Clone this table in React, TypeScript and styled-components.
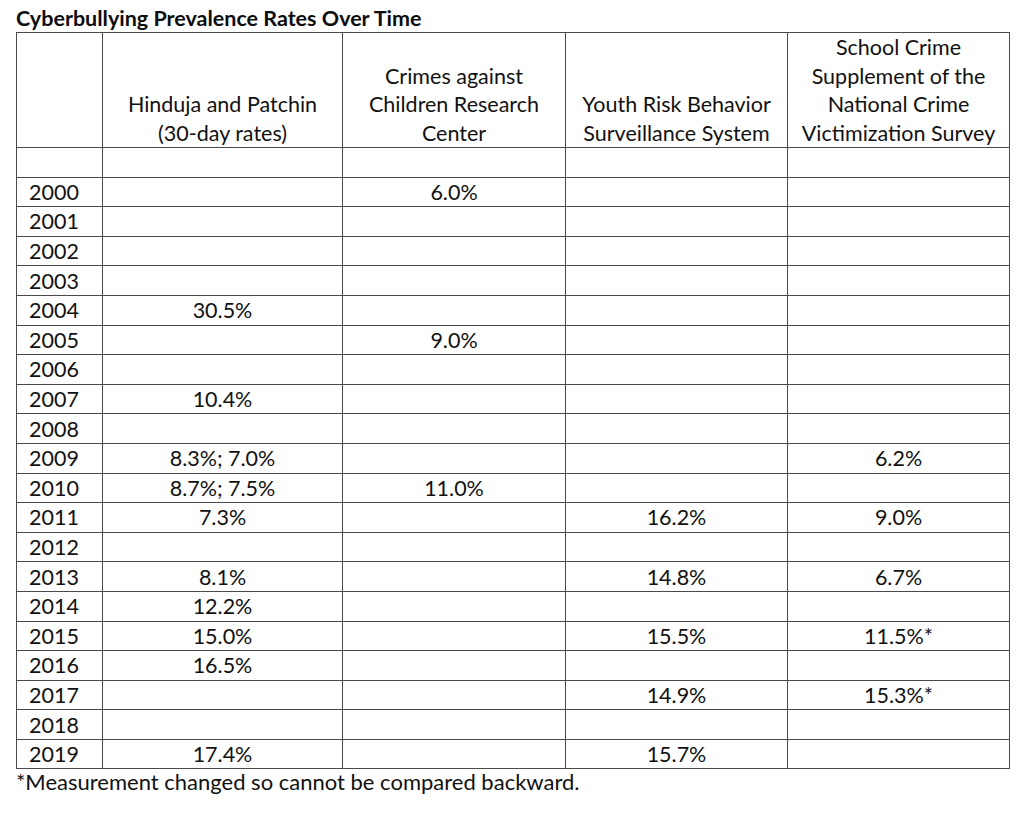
import React from "react";
import styled, { createGlobalStyle } from "styled-components";

const Global = createGlobalStyle`
  html, body { margin: 0; padding: 0; background: #ffffff; }
  body { font-family: Lato, "Open Sans", "Liberation Sans", sans-serif; color: #111111; }
`;

const Page = styled.div`
  width: 1024px;
  height: 822px;
  padding-left: 16px;
  box-sizing: border-box;
`;

const Title = styled.h1`
  margin: 0;
  padding-top: 5px;
  height: 32px;
  box-sizing: border-box;
  font-size: 21.5px;
  line-height: 26px;
  font-weight: 700;
  color: #0d0d0d;
`;

const Table = styled.table`
  border-collapse: collapse;
  table-layout: fixed;
  width: 993px;
  font-size: 21.5px;
`;

const HeadCell = styled.th`
  border: 1px solid #4a4a4a;
  height: 114px;
  vertical-align: bottom;
  text-align: center;
  font-weight: 400;
  line-height: 28.5px;
  padding: 0 2px;
  box-sizing: border-box;
  white-space: nowrap;
`;

const Cell = styled.td<{ $year?: boolean }>`
  border: 1px solid #4a4a4a;
  height: 29.6px;
  padding: ${(p) => (p.$year ? "0 0 0 12px" : "0 4px")};
  text-align: ${(p) => (p.$year ? "left" : "center")};
  line-height: 28px;
  box-sizing: border-box;
  white-space: nowrap;
`;

const Note = styled.p`
  margin: 0;
  font-size: 22px;
  line-height: 26px;
`;

const headers = [
  "",
  "Hinduja and Patchin\n(30-day rates)",
  "Crimes against\nChildren Research\nCenter",
  "Youth Risk Behavior\nSurveillance System",
  "School Crime\nSupplement of the\nNational Crime\nVictimization Survey",
];

const rows: [string, string, string, string, string][] = [
  ["2000", "", "6.0%", "", ""],
  ["2001", "", "", "", ""],
  ["2002", "", "", "", ""],
  ["2003", "", "", "", ""],
  ["2004", "30.5%", "", "", ""],
  ["2005", "", "9.0%", "", ""],
  ["2006", "", "", "", ""],
  ["2007", "10.4%", "", "", ""],
  ["2008", "", "", "", ""],
  ["2009", "8.3%; 7.0%", "", "", "6.2%"],
  ["2010", "8.7%; 7.5%", "11.0%", "", ""],
  ["2011", "7.3%", "", "16.2%", "9.0%"],
  ["2012", "", "", "", ""],
  ["2013", "8.1%", "", "14.8%", "6.7%"],
  ["2014", "12.2%", "", "", ""],
  ["2015", "15.0%", "", "15.5%", "11.5%*"],
  ["2016", "16.5%", "", "", ""],
  ["2017", "", "", "14.9%", "15.3%*"],
  ["2018", "", "", "", ""],
  ["2019", "17.4%", "", "15.7%", ""],
];

const widths = [86, 240, 223, 222, 222];

export default function App() {
  return (
    <Page>
      <Global />
      <Title>Cyberbullying Prevalence Rates Over Time</Title>
      <Table>
        <colgroup>
          {widths.map((w, i) => (
            <col key={i} style={{ width: w }} />
          ))}
        </colgroup>
        <thead>
          <tr>
            {headers.map((h, i) => (
              <HeadCell key={i}>
                {h.split("\n").map((line, j) => (
                  <React.Fragment key={j}>
                    {j > 0 && <br />}
                    {line}
                  </React.Fragment>
                ))}
              </HeadCell>
            ))}
          </tr>
        </thead>
        <tbody>
          <tr>
            {widths.map((_, i) => (
              <Cell key={i} $year={i === 0} />
            ))}
          </tr>
          {rows.map((r) => (
            <tr key={r[0]}>
              {r.map((v, i) => (
                <Cell key={i} $year={i === 0}>
                  {v}
                </Cell>
              ))}
            </tr>
          ))}
        </tbody>
      </Table>
      <Note>*Measurement changed so cannot be compared backward.</Note>
    </Page>
  );
}
